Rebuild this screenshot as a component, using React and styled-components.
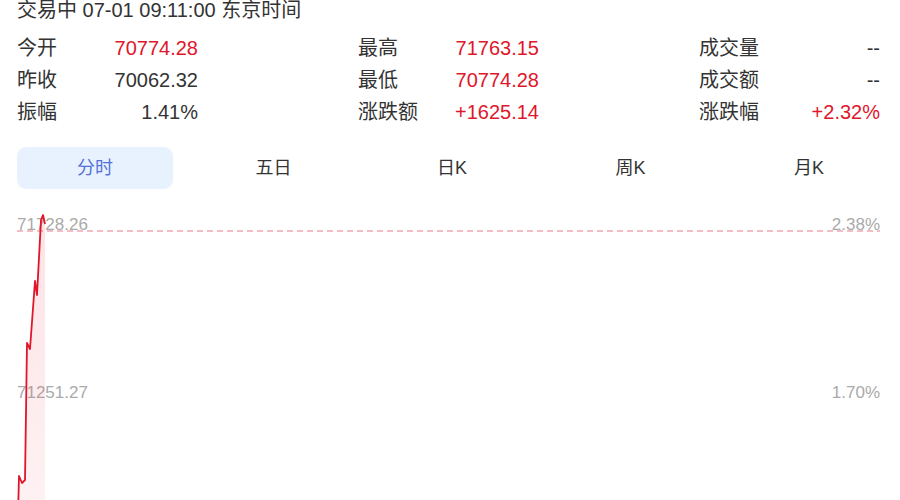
import React from "react";
import styled, { createGlobalStyle } from "styled-components";

const GlobalStyle = createGlobalStyle`
  html, body {
    margin: 0;
    padding: 0;
    background: #fff;
    overflow: hidden;
  }
  body {
    font-family: "Liberation Sans", "Noto Sans CJK SC", sans-serif;
    color: #333;
  }
`;

const RED = "#e0162b";

const Page = styled.div`
  padding: 0 20px 0 17px;
  width: 900px;
  box-sizing: border-box;
`;

const Status = styled.div`
  font-size: 20px;
  line-height: 20px;
  color: #333;
  white-space: nowrap;
`;

const Quote = styled.div`
  margin-top: 12px;
  display: grid;
  grid-template-columns: repeat(3, 181px);
  justify-content: space-between;
`;

const Column = styled.div`
  display: flex;
  flex-direction: column;
`;

const Row = styled.div`
  display: flex;
  justify-content: space-between;
  align-items: baseline;
  height: 32px;
  line-height: 32px;
  font-size: 20px;
`;

const Label = styled.span`
  color: #333;
`;

const Value = styled.span`
  color: ${(p) => (p.$up ? RED : "#333")};
`;

const Tabs = styled.div`
  margin-top: 19px;
  display: grid;
  grid-template-columns: repeat(5, 156px);
  justify-content: space-between;
  width: 870px;
`;

const Tab = styled.div`
  height: 42px;
  box-sizing: border-box;
  padding-bottom: 5px;
  display: flex;
  align-items: center;
  justify-content: center;
  border-radius: 9px;
  font-size: 18px;
  background: ${(p) => (p.$active ? "#e7f2fe" : "transparent")};
  color: ${(p) => (p.$active ? "#5470d8" : "#333")};
`;

const Chart = styled.div`
  position: relative;
  margin-top: 16px;
  height: 300px;
`;

const AxisLabel = styled.span`
  position: absolute;
  top: ${(p) => p.$top}px;
  ${(p) => (p.$side === "right" ? "right: 0;" : "left: 0;")}
  font-size: 17px;
  line-height: 17px;
  color: #aaa;
`;

const Plot = styled.svg`
  position: relative;
  display: block;
  width: 100%;
  height: 300px;
  overflow: visible;
`;

const quoteColumns = [
  [
    { label: "今开", value: "70774.28", up: true },
    { label: "昨收", value: "70062.32" },
    { label: "振幅", value: "1.41%" },
  ],
  [
    { label: "最高", value: "71763.15", up: true },
    { label: "最低", value: "70774.28", up: true },
    { label: "涨跌额", value: "+1625.14", up: true },
  ],
  [
    { label: "成交量", value: "--" },
    { label: "成交额", value: "--" },
    { label: "涨跌幅", value: "+2.32%", up: true },
  ],
];

const tabs = ["分时", "五日", "日K", "周K", "月K"];

// intraday price trace, in plot coordinates
const trace = [
  [1, 310],
  [2, 271],
  [5, 278],
  [8, 275],
  [10, 138],
  [13, 144],
  [18, 76],
  [20, 90],
  [24, 15],
  [26, 10],
  [28, 19],
];

export default function App() {
  const line = trace.map(([x, y]) => `${x},${y}`).join(" ");
  const area = `${line} 28,310 1,310`;
  return (
    <>
      <GlobalStyle />
      <Page>
        <Status>交易中 07-01 09:11:00 东京时间</Status>
        <Quote>
          {quoteColumns.map((col, i) => (
            <Column key={i}>
              {col.map((item) => (
                <Row key={item.label}>
                  <Label>{item.label}</Label>
                  <Value $up={item.up}>{item.value}</Value>
                </Row>
              ))}
            </Column>
          ))}
        </Quote>
        <Tabs>
          {tabs.map((t, i) => (
            <Tab key={t} $active={i === 0}>
              {t}
            </Tab>
          ))}
        </Tabs>
        <Chart>
          <AxisLabel $top={11}>71728.26</AxisLabel>
          <AxisLabel $top={11} $side="right">2.38%</AxisLabel>
          <AxisLabel $top={179}>71251.27</AxisLabel>
          <AxisLabel $top={179} $side="right">1.70%</AxisLabel>
          <Plot viewBox="0 0 863 300" preserveAspectRatio="none">
            <defs>
              <linearGradient id="areaFill" x1="0" y1="0" x2="0" y2="1">
                <stop offset="0" stopColor="#f04a5e" stopOpacity="0.16" />
                <stop offset="1" stopColor="#f04a5e" stopOpacity="0.07" />
              </linearGradient>
            </defs>
            <line
              x1="0"
              y1="26"
              x2="863"
              y2="26"
              stroke="#e97a8a"
              strokeWidth="1"
              strokeDasharray="6 4"
            />
            <polygon points={area} fill="url(#areaFill)" />
            <polyline
              points={line}
              fill="none"
              stroke={RED}
              strokeWidth="1.8"
              strokeLinejoin="round"
            />
          </Plot>
        </Chart>
      </Page>
    </>
  );
}
